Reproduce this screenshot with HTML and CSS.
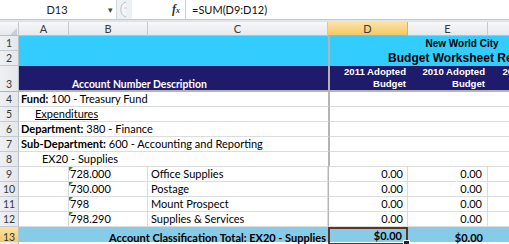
FILE: index.html
```html
<!DOCTYPE html>
<html lang="en">
<head>
  <meta charset="UTF-8" />
  <title>Budget Worksheet</title>
  <link rel="stylesheet" href="styles.css">
</head>
<body>
  <!-- formula bar -->
  <div class="formula-bar">
    <div class="name-box">
      <span class="cell-ref">D13</span>
      <span class="drop">&#9662;</span>
    </div>
    <div class="splitter">
      <svg width="14" height="19" viewBox="0 0 14 19"><path d="M9 2 A8 8 0 0 0 9 17" fill="#f4f6f8" stroke="#b9c0c9"/><path d="M7 8 h3" stroke="#c8cdd4"/></svg>
    </div>
    <div class="fx-area"><span class="fx">f<small>x</small></span></div>
    <div class="formula">=SUM(D9:D12)</div>
  </div>
  <div class="bar-gap"></div>

  <div class="sheet">
    <div class="row heads">
      <div class="corner"><svg width="10" height="10" viewBox="0 0 10 10"><path d="M9 2 L9 9 L2 9 Z" fill="#c9ced5"/></svg></div>
      <div class="ch">A</div>
      <div class="ch">B</div>
      <div class="ch">C</div>
      <div class="ch active">D</div>
      <div class="ch">E</div>
      <div class="ch"></div>
    </div>

    <div class="row r15 cyan">
      <div class="rh">1</div>
      <div class="span-ac"></div>
      <div class="title-cell"><div class="title city">New World City</div></div>
    </div>
    <div class="row r15 cyan">
      <div class="rh">2</div>
      <div class="span-ac"></div>
      <div class="title-cell"><div class="title big">Budget Worksheet Report</div></div>
    </div>
    <div class="row r3 navy">
      <div class="rh">3</div>
      <div class="span-ac acct-head">Account Number Description</div>
      <div class="yr d-col">2011 Adopted<br>Budget</div>
      <div class="yr e-col">2010 Adopted<br>Budget</div>
      <div class="yr f-col">2012 Adopted<br>Budget</div>
    </div>

    <div class="row r15 plain">
      <div class="rh">4</div>
      <div class="span-ac txt"><b>Fund:</b> 100 - Treasury Fund</div>
      <div class="c d-col"></div><div class="c"></div><div class="c"></div>
    </div>
    <div class="row r15 plain">
      <div class="rh">5</div>
      <div class="span-ac txt ind1"><u>Expenditures</u></div>
      <div class="c d-col"></div><div class="c"></div><div class="c"></div>
    </div>
    <div class="row r15 plain">
      <div class="rh">6</div>
      <div class="span-ac txt"><b>Department:</b> 380 - Finance</div>
      <div class="c d-col"></div><div class="c"></div><div class="c"></div>
    </div>
    <div class="row r15 plain">
      <div class="rh">7</div>
      <div class="span-ac txt"><b>Sub-Department:</b> 600 - Accounting and Reporting</div>
      <div class="c d-col"></div><div class="c"></div><div class="c"></div>
    </div>
    <div class="row r15 plain">
      <div class="rh">8</div>
      <div class="span-ac txt ind2">EX20 - Supplies</div>
      <div class="c d-col"></div><div class="c"></div><div class="c"></div>
    </div>

    <div class="row r15 item">
      <div class="rh">9</div>
      <div class="c"></div>
      <div class="c acct"><i class="flag"></i>728.000</div>
      <div class="c desc">Office Supplies</div>
      <div class="c num d-col">0.00</div>
      <div class="c num">0.00</div>
      <div class="c"></div>
    </div>
    <div class="row r15 item">
      <div class="rh">10</div>
      <div class="c"></div>
      <div class="c acct"><i class="flag"></i>730.000</div>
      <div class="c desc">Postage</div>
      <div class="c num d-col">0.00</div>
      <div class="c num">0.00</div>
      <div class="c"></div>
    </div>
    <div class="row r15 item">
      <div class="rh">11</div>
      <div class="c"></div>
      <div class="c acct"><i class="flag"></i>798</div>
      <div class="c desc">Mount Prospect</div>
      <div class="c num d-col">0.00</div>
      <div class="c num">0.00</div>
      <div class="c"></div>
    </div>
    <div class="row r15 item">
      <div class="rh">12</div>
      <div class="c"></div>
      <div class="c acct"><i class="flag"></i>798.290</div>
      <div class="c desc">Supplies &amp; Services</div>
      <div class="c num d-col">0.00</div>
      <div class="c num">0.00</div>
      <div class="c"></div>
    </div>

    <div class="row r15 total">
      <div class="rh active">13</div>
      <div class="span-ac total-label">Account Classification Total: EX20 - Supplies</div>
      <div class="c num d-col selected">$0.00<i class="handle"></i></div>
      <div class="c num">$0.00</div>
      <div class="c"></div>
    </div>
    <div class="row r15 plain">
      <div class="rh"></div>
      <div class="span-ac"></div>
      <div class="c d-col"></div><div class="c"></div><div class="c"></div>
    </div>
  </div>
</body>
</html>
```

FILE: styles.css
```css
:root {
  --cols: 19px 50px 79px 180px 80px 80px 80px;
  --grid: #dadcdd;
  --head-line: #c5cad1;
  --cyan: #33ccff;
  --navy: #1e1b6d;
  --total: #86cbe8;
  --freeze: #b4b4b4;
}
body {
  margin: 0;
  width: 509px;
  height: 244px;
  overflow: hidden;
  font-family: Lato, "Liberation Sans", sans-serif;
  font-size: 11px;
  color: #000;
  background: #fff;
}

/* Formula bar */
.formula-bar {
  display: flex;
  height: 19px;
  border-bottom: 1px solid #c4cad2;
  background: #fff;
}
.name-box {
  width: 116px;
  display: flex;
  align-items: center;
  border-right: 1px solid #d3d8de;
}
.cell-ref {
  flex: 1;
  text-align: center;
  padding-left: 6px;
  color: #222;
}
.drop {
  font-size: 9px;
  color: #444;
  padding-right: 3px;
}
.splitter {
  width: 15px;
  display: flex;
  align-items: center;
  background: #eef1f4;
}
.fx-area {
  width: 48px;
  display: flex;
  align-items: center;
  justify-content: flex-end;
  padding-right: 5px;
  border-right: 1px solid #c9cfd6;
}
.fx {
  font-family: "Liberation Serif", serif;
  font-style: italic;
  font-weight: bold;
  font-size: 12px;
  color: #333;
}
.fx small {
  font-size: 8px;
}
.formula {
  flex: 1;
  display: flex;
  align-items: center;
  padding-left: 6px;
  color: #111;
}
.bar-gap {
  height: 2px;
  background: #dfe4ea;
}

/* Sheet grid */
.sheet {
  width: 509px;
  height: 222px;
  overflow: hidden;
}
.row {
  display: grid;
  grid-template-columns: var(--cols);
  width: 568px;
  box-sizing: border-box;
}
.row > div {
  box-sizing: border-box;
  min-width: 0;
}
.r15 {
  height: 15px;
}
.heads {
  height: 14px;
  background: linear-gradient(#f6f7f9, #e6e9ed);
  border-bottom: 1px solid #b9bfc7;
}
.ch {
  border-right: 1px solid var(--head-line);
  text-align: center;
  line-height: 13px;
  color: #3a3a3a;
}
.ch.active {
  background: linear-gradient(#fbe3a1, #f3c868);
  border-right-color: #e0b154;
  border-bottom: 1px solid #e0a83c;
}
.corner {
  border-right: 1px solid var(--head-line);
  display: flex;
  align-items: flex-end;
  justify-content: flex-end;
}
.rh {
  background: linear-gradient(90deg, #eef0f3, #e4e7eb);
  border-right: 1px solid #b9bfc7;
  border-bottom: 1px solid var(--head-line);
  font-size: 10.5px;
  color: #3a3a3a;
  display: flex;
  align-items: flex-end;
  justify-content: center;
  padding-bottom: 1px;
}
.rh.active {
  background: linear-gradient(#fbe3a1, #f3c868);
  border-bottom-color: #e0a83c;
}

/* Title rows */
.cyan {
  background: var(--cyan);
}
.span-ac {
  grid-column: 2 / 5;
}
.title-cell {
  grid-column: 5 / -1;
  border-left: 2px solid var(--freeze);
  display: flex;
  align-items: flex-end;
}
.title {
  width: 264px;
  flex: none;
  text-align: center;
  font-family: "Liberation Sans", sans-serif;
  font-weight: bold;
  color: #000;
  white-space: nowrap;
}
.title.city {
  font-size: 10px;
  padding-bottom: 2px;
}
.title.big {
  font-size: 12px;
  line-height: 14px;
  padding-bottom: 1px;
}

/* Column titles */
.r3 {
  height: 26px;
  border-bottom: 2px solid var(--freeze);
}
.navy {
  background: var(--navy);
}
.navy .rh {
  border-bottom: none;
}
.acct-head,
.yr {
  font-family: "Liberation Sans", sans-serif;
  font-weight: bold;
  font-size: 9.6px;
  line-height: 12px;
  color: #fff;
  display: flex;
  align-items: flex-end;
  padding-bottom: 1px;
  white-space: nowrap;
}
.acct-head {
  font-family: Lato, "Liberation Sans", sans-serif;
  font-size: 10.4px;
  padding-left: 53px;
}
.yr {
  text-align: right;
  justify-content: flex-end;
  padding-right: 2px;
}
.yr.e-col,
.yr.f-col {
  padding-right: 3px;
}

/* Body cells */
.d-col {
  border-left: 2px solid var(--freeze);
}
.plain .span-ac,
.plain .c,
.item .c {
  border-bottom: 1px solid var(--grid);
}
.item .c {
  border-right: 1px solid var(--grid);
}
.item .c.d-col {
  border-left-width: 1px;
}
.txt,
.c {
  display: flex;
  align-items: flex-end;
  white-space: nowrap;
  padding-left: 2px;
  line-height: 14px;
}
.ind1 {
  padding-left: 16px;
}
.ind2 {
  padding-left: 23px;
}
.txt b {
  margin-right: 3px;
}
.acct {
  position: relative;
  padding-left: 1px;
}
.flag {
  position: absolute;
  top: 0;
  left: 0;
  width: 0;
  height: 0;
  border-top: 4px solid #2a8f3b;
  border-right: 4px solid transparent;
}
.desc {
  padding-left: 3px;
}
.num {
  justify-content: flex-end;
  padding-right: 5px;
}
.d-col.num {
  padding-right: 4px;
}

/* Total row */
.total {
  background: var(--total);
}
.total .rh {
  color: #333;
}
.total-label {
  font-weight: bold;
  display: flex;
  align-items: flex-end;
  justify-content: flex-end;
  padding-right: 2px;
  line-height: 14px;
  white-space: nowrap;
}
.total .num {
  font-weight: bold;
}
.selected {
  position: relative;
  border: 2px solid #5e3522;
  padding-right: 3px;
}
.handle {
  position: absolute;
  right: -4px;
  bottom: -4px;
  width: 5px;
  height: 5px;
  background: #222;
  border: 1px solid #fff;
}
```
